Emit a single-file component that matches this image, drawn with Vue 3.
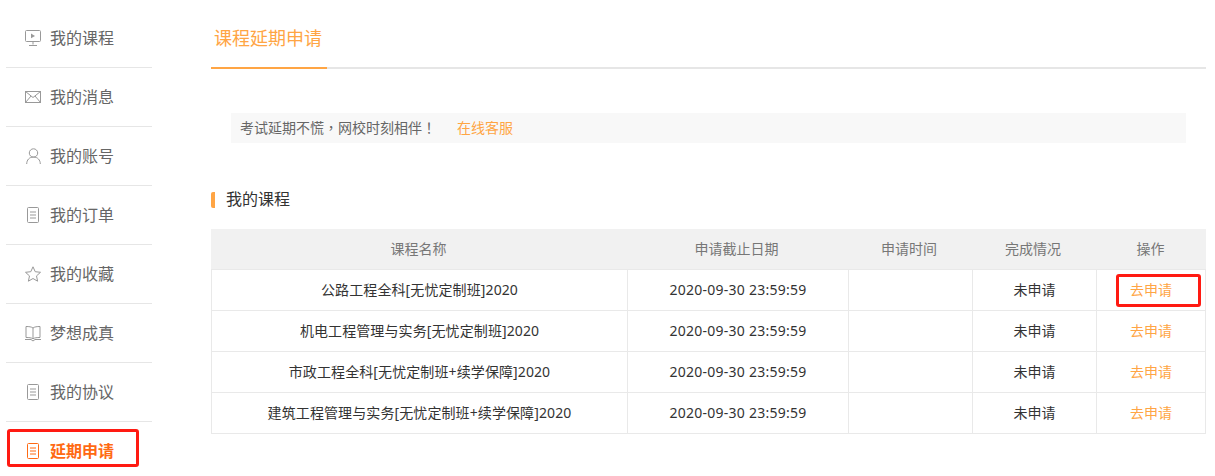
<script setup>
const menu = [
  { label: '我的课程', icon: 'screen' },
  { label: '我的消息', icon: 'mail' },
  { label: '我的账号', icon: 'user' },
  { label: '我的订单', icon: 'doc' },
  { label: '我的收藏', icon: 'star' },
  { label: '梦想成真', icon: 'book' },
  { label: '我的协议', icon: 'doc' },
  { label: '延期申请', icon: 'doc', active: true }
]
const rows = [
  '公路工程全科[无忧定制班]2020',
  '机电工程管理与实务[无忧定制班]2020',
  '市政工程全科[无忧定制班+续学保障]2020',
  '建筑工程管理与实务[无忧定制班+续学保障]2020'
]
</script>

<template>
  <div class="page">
    <aside class="side">
      <div v-for="m in menu" :key="m.label" class="item" :class="{ active: m.active }">
        <svg class="ico" width="18" height="18" viewBox="0 0 18 18" fill="none" stroke="currentColor" stroke-width="1">
          <template v-if="m.icon === 'screen'">
            <rect x="1.5" y="1.5" width="15" height="11" rx="1" />
            <path d="M9 12.5v3M5 16.5h8" />
            <path d="M7 4.5l4 2.4-4 2.4z" fill="currentColor" stroke="none" />
          </template>
          <template v-else-if="m.icon === 'mail'">
            <rect x="1.5" y="3.5" width="15" height="11" />
            <path d="M1.5 3.5L9 9.5l7.5-6M1.5 14.5L7 8M16.5 14.5L11 8" />
          </template>
          <template v-else-if="m.icon === 'user'">
            <circle cx="9.5" cy="6" r="4.2" />
            <path d="M2.7 17c0-4 2.6-7 6.8-7s6.8 3 6.8 7" />
          </template>
          <template v-else-if="m.icon === 'doc'">
            <rect x="3.5" y="1.5" width="11" height="15" rx="1" />
            <path d="M6 6h6M6 9h6M6 12h6" />
          </template>
          <template v-else-if="m.icon === 'star'">
            <path d="M9 1.8l2.2 4.9 5.3.6-4 3.6 1.1 5.3L9 13.5l-4.6 2.7 1.1-5.3-4-3.6 5.3-.6z" />
          </template>
          <template v-else>
            <path d="M9 4C7.5 2.8 5 2.5 2 2.5v11c3 0 5.5.2 7 1.3 1.5-1.1 4-1.3 7-1.3v-11c-3 0-5.5.3-7 1.5zM9 4v10.5" />
            <path d="M1 15.5h6l2 1.5 2-1.5h6" />
          </template>
        </svg>
        <span class="lbl">{{ m.label }}</span>
      </div>
      <div class="mark side-mark"></div>
    </aside>

    <main class="main">
      <div class="tabs"><div class="tab">课程延期申请</div></div>
      <div class="notice">
        <span>考试延期不慌<span class="punct">，</span>网校时刻相伴<span class="punct">！</span></span>
        <a class="link">在线客服</a>
      </div>
      <h2 class="title">我的课程</h2>
      <div class="table">
        <div class="tr th">
          <div>课程名称</div><div>申请截止日期</div><div>申请时间</div><div>完成情况</div><div>操作</div>
        </div>
        <div v-for="(r, i) in rows" :key="r" class="tr td">
          <div class="name">{{ r }}</div>
          <div class="date">2020-09-30 23:59:59</div>
          <div></div>
          <div>未申请</div>
          <div class="op">去申请<span v-if="i === 0" class="mark op-mark"></span></div>
        </div>
      </div>
    </main>
  </div>
</template>

<style scoped>
.page {
  position: relative;
  display: flex;
  width: 1215px;
  height: 476px;
  overflow: hidden;
  background: #fff;
  font-family: "Noto Sans", "Noto Sans CJK SC", sans-serif;
}
.side {
  position: relative;
  width: 146px;
  margin: 9px 0 0 6px;
}
.item {
  display: flex;
  align-items: center;
  height: 58px;
  padding-left: 18px;
  border-bottom: 1px solid #e6e6e6;
  color: #666;
  font-size: 16px;
}
.item:last-of-type { border-bottom: 0; }
.ico {
  flex: none;
  margin-right: 8px;
  color: #999;
}
.lbl { margin-bottom: 2px; }
.item.active { color: #ff6a13; font-weight: 700; }
.item.active .ico { color: #ff6a13; }
.mark {
  position: absolute;
  box-sizing: border-box;
  border: 3px solid #ff1a12;
  border-radius: 3px;
  pointer-events: none;
}
.side-mark {
  left: 1px;
  top: 420px;
  width: 132px;
  height: 38px;
}
.main {
  width: 995px;
  margin-left: 59px;
}
.tabs {
  height: 67px;
  border-bottom: 2px solid #e6e6e6;
}
.tab {
  box-sizing: border-box;
  width: 116px;
  height: 69px;
  padding: 23px 0 0 3px;
  border-bottom: 2px solid #ffa544;
  color: #ffa544;
  font-size: 18px;
  line-height: 30px;
}
.notice {
  box-sizing: border-box;
  display: flex;
  align-items: center;
  gap: 21px;
  height: 30px;
  margin: 44px 20px 0;
  padding: 0 0 2px 9px;
  background: #f8f8f8;
  color: #666;
  font-size: 14px;
}
.punct { font-family: "Noto Sans CJK TC", sans-serif; }
.link { color: #ffa544; }
.title {
  height: 16px;
  margin: 49px 0 21px;
  padding-left: 11px;
  border-left: 4px solid #ffa544;
  border-radius: 2px;
  color: #333;
  font-size: 16px;
  font-weight: 400;
  line-height: 14px;
}
.table {
  border: 1px solid #e9e9e9;
  border-top: 0;
  font-size: 14px;
}
.tr {
  display: grid;
  grid-template-columns: 415px 221px 124px 124px 1fr;
  text-align: center;
}
.th {
  height: 40px;
  margin: 0 -1px;
  border-bottom: 1px solid #e9e9e9;
  background: #f1f1f1;
  color: #777;
  line-height: 40px;
}
.td {
  height: 40px;
  border-bottom: 1px solid #e9e9e9;
  color: #333;
  line-height: 40px;
}
.td:last-child { border-bottom: 0; }
.td > div + div { border-left: 1px solid #e9e9e9; }
.name { letter-spacing: .1px; }
.date { letter-spacing: .25px; }
.op {
  position: relative;
  color: #ffa544;
}
.op-mark {
  left: 19px;
  top: 4px;
  width: 85px;
  height: 33px;
}
</style>
